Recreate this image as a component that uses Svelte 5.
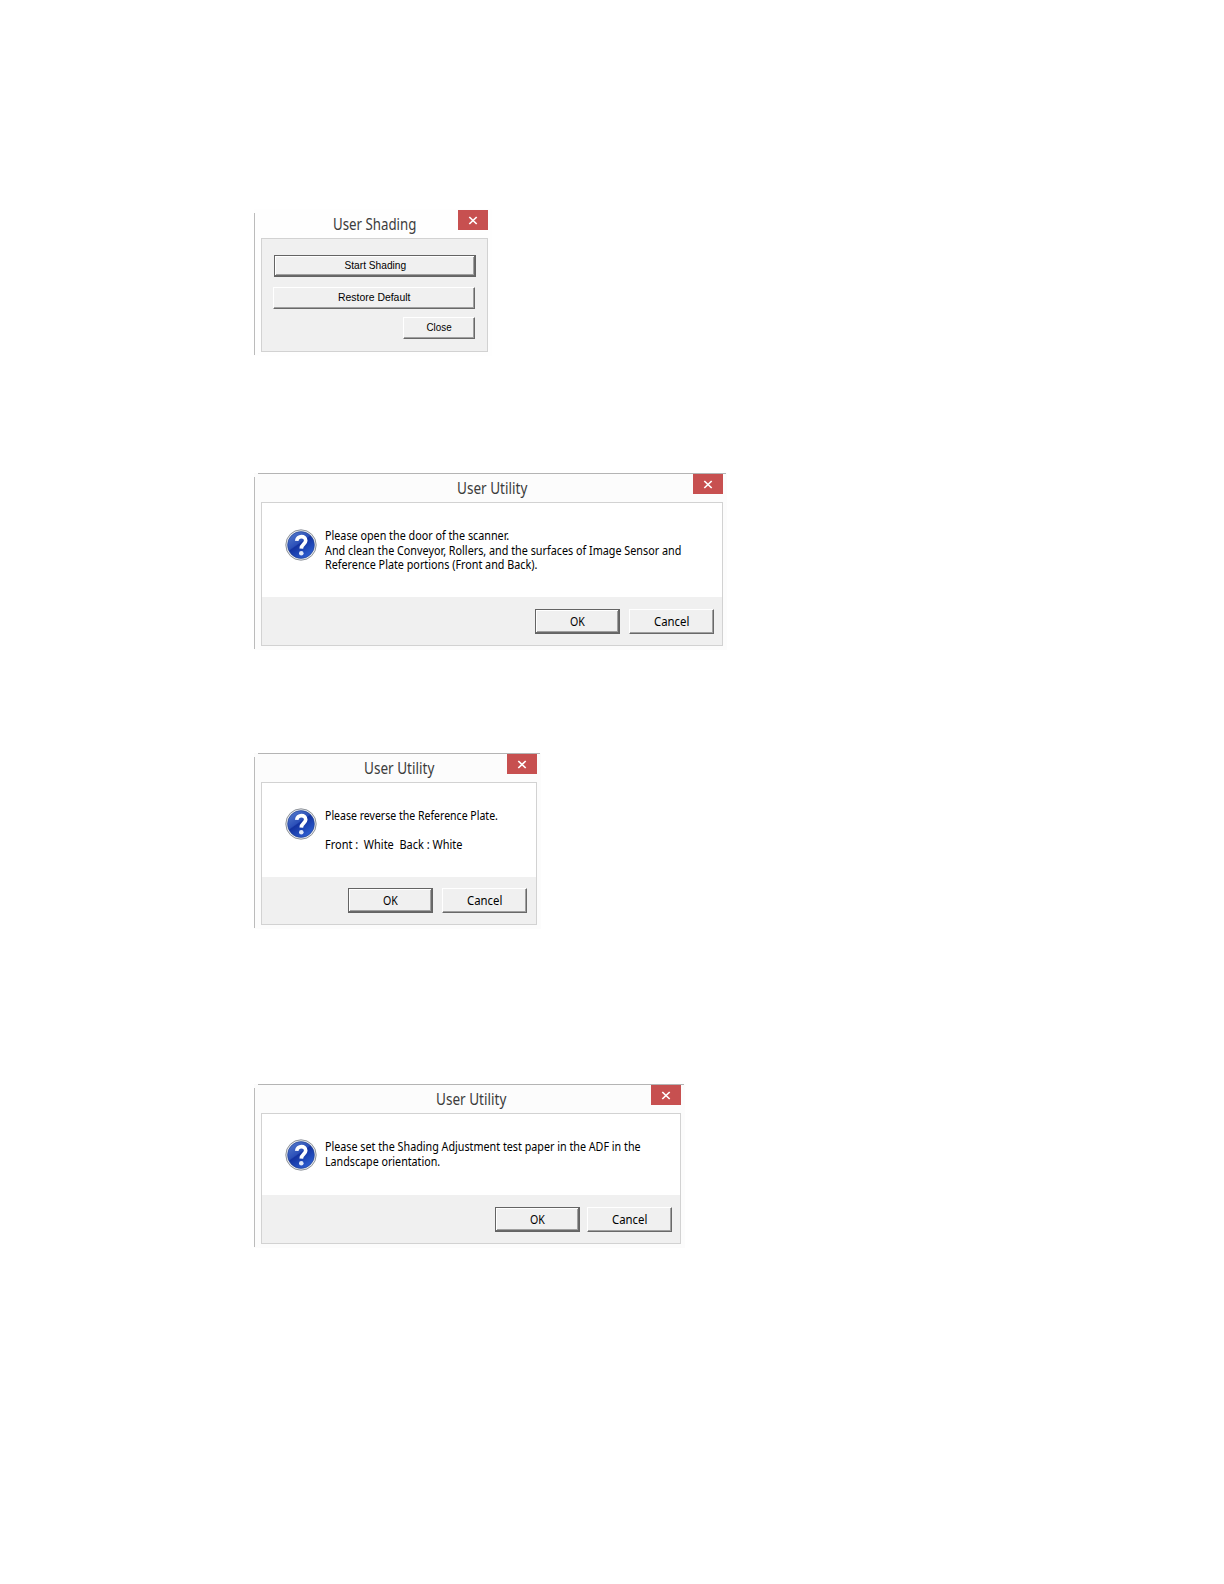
<script lang="ts">
  type Line = { text: string; width: number };

  type Message = {
    id: string;
    width: number;
    bodyHeight: number;
    gap: number;
    buttonGap: number;
    footTop: number;
    footRight: number;
    footHeight: number;
    textTop: number;
    iconTop: number;
    lines: Line[];
  };

  const messages: Message[] = [
    {
      id: 'clean',
      width: 462,
      bodyHeight: 94,
      gap: 117,
      buttonGap: 9,
      footTop: 12,
      footRight: 8,
      footHeight: 48,
      textTop: 26,
      iconTop: 26,
      lines: [
        { text: 'Please open the door of the scanner.', width: 184 },
        { text: 'And clean the Conveyor, Rollers, and the surfaces of Image Sensor and', width: 356 },
        { text: 'Reference Plate portions (Front and Back).', width: 212 },
      ],
    },
    {
      id: 'reverse',
      width: 276,
      bodyHeight: 94,
      gap: 103,
      buttonGap: 9,
      footTop: 11,
      footRight: 9,
      footHeight: 47,
      textTop: 26,
      iconTop: 25,
      lines: [
        { text: 'Please reverse the Reference Plate.', width: 173 },
        { text: '', width: 0 },
        { text: 'Front :  White  Back : White', width: 137 },
      ],
    },
    {
      id: 'paper',
      width: 420,
      bodyHeight: 81,
      gap: 155,
      buttonGap: 7,
      footTop: 12,
      footRight: 8,
      footHeight: 48,
      textTop: 26,
      iconTop: 25,
      lines: [
        { text: 'Please set the Shading Adjustment test paper in the ADF in the', width: 316 },
        { text: 'Landscape orientation.', width: 115 },
      ],
    },
  ];

  // squeeze a label horizontally to the dialog font's narrower advance widths
  function fit(node: HTMLElement, width: number) {
    const natural = node.offsetWidth;
    if (natural > 0 && width > 0) node.style.transform = `scaleX(${width / natural})`;
  }
</script>

{#snippet titlebar(title: string, width: number)}
  <header class="titlebar">
    <h1 class="title"><span class="fit" use:fit={width}>{title}</span></h1>
    <button type="button" class="close" aria-label="Close window">
      <svg width="10" height="9" viewBox="0 0 10 9" aria-hidden="true">
        <path d="M1.3 1L8.7 8M8.7 1L1.3 8" stroke="#fff" stroke-width="1.7" fill="none" />
      </svg>
    </button>
  </header>
{/snippet}

{#snippet question()}
  <svg class="icon" width="32" height="32" viewBox="0 0 32 32" aria-hidden="true">
    <defs>
      <linearGradient id="ball" x1="0" y1="0" x2="0.7" y2="1">
        <stop offset="0" stop-color="#5a80d0" />
        <stop offset="0.48" stop-color="#2c50b8" />
        <stop offset="0.52" stop-color="#1433a0" />
        <stop offset="1" stop-color="#2d5fd2" />
      </linearGradient>
    </defs>
    <circle cx="16" cy="16" r="15.2" fill="#e6e9ee" stroke="#85898f" stroke-width="0.9" />
    <circle cx="16" cy="16" r="13.4" fill="url(#ball)" stroke="#203f91" stroke-width="0.6" />
    <path d="M11.7 11.9C12 6.1 21 6.2 20.7 11.7C20.5 15.2 16.4 15.2 16.3 19.6" fill="none" stroke="#fff" stroke-width="3.7" />
    <circle cx="16.3" cy="24.2" r="2.3" fill="#dfe8f8" />
  </svg>
{/snippet}

<main class="page">
  <section class="dialog shading">
    {@render titlebar('User Shading', 83)}
    <div class="client panel">
      <button type="button" class="btn default wide"><span class="fit" use:fit={62}>Start Shading</span></button>
      <button type="button" class="btn wide restore"><span class="fit" use:fit={72}>Restore Default</span></button>
      <button type="button" class="btn small"><span class="fit" use:fit={25}>Close</span></button>
    </div>
  </section>

  {#each messages as m (m.id)}
    <section class="dialog lined" style={`width:${m.width + 11}px;margin-top:${m.gap}px`}>
      {@render titlebar('User Utility', 70)}
      <div class="client">
        <div class="body" style={`height:${m.bodyHeight}px`}>
          <div style={`padding-top:${m.iconTop}px`}>{@render question()}</div>
          <div class="text" style={`padding-top:${m.textTop}px`}>
            {#each m.lines as line}
              <p><span class="fit left" use:fit={line.width}>{line.text}</span></p>
            {/each}
          </div>
        </div>
        <footer style={`height:${m.footHeight}px;padding-top:${m.footTop}px;padding-right:${m.footRight}px;gap:${m.buttonGap}px`}>
          <button type="button" class="btn default"><span class="fit" use:fit={15}>OK</span></button>
          <button type="button" class="btn"><span class="fit" use:fit={35}>Cancel</span></button>
        </footer>
      </div>
    </section>
  {/each}
</main>

<style>
  :global(body) {
    background: #fff;
  }

  .page {
    box-sizing: border-box;
    width: 1224px;
    height: 1584px;
    padding: 209px 0 0 254px;
    font-family: 'Noto Sans', 'Open Sans', sans-serif;
    color: #000;
    overflow: hidden;
  }

  .dialog {
    position: relative;
    box-sizing: border-box;
    padding: 1px 4px 4px 7px;
    background: #fcfcfc;
  }

  .dialog::before {
    content: '';
    position: absolute;
    left: 0;
    top: 4px;
    bottom: 1px;
    width: 1px;
    background: #bbb;
  }

  .lined::after {
    content: '';
    position: absolute;
    left: 4px;
    right: 1px;
    top: 0;
    height: 1px;
    background: #b4b4b4;
  }

  .shading {
    width: 238px;
    height: 147px;
    background: #fefefe;
  }

  .titlebar {
    display: grid;
    grid-template-columns: 30px 1fr 30px;
    height: 28px;
  }

  .title {
    grid-column: 1 / 4;
    grid-row: 1;
    margin: 0;
    padding-top: 3px;
    font-size: 15.5px;
    font-weight: 400;
    line-height: 22px;
    text-align: center;
    color: #3c3c3c;
  }

  .close {
    grid-column: 3;
    grid-row: 1;
    display: flex;
    align-items: center;
    justify-content: center;
    width: 30px;
    height: 20px;
    padding: 0;
    border: 0;
    background: #c75050;
  }

  .fit {
    display: inline-block;
    white-space: pre;
    transform-origin: center;
  }

  .left {
    transform-origin: left;
  }

  .client {
    border: 1px solid #d2d2d2;
  }

  .panel {
    display: flex;
    flex-direction: column;
    box-sizing: border-box;
    height: 114px;
    padding: 16px 12px 0 11px;
    background: #f0f0f0;
  }

  .body {
    display: flex;
    gap: 8px;
    padding-left: 23px;
    background: #fff;
  }

  .icon {
    display: block;
  }

  .text {
    font-size: 12px;
    line-height: 14.5px;
  }

  .text p {
    height: 14.5px;
    margin: 0;
  }

  footer {
    display: flex;
    justify-content: flex-end;
    box-sizing: border-box;
    background: #f0f0f0;
  }

  /* raised classic push button */
  .btn {
    display: flex;
    align-items: center;
    justify-content: center;
    box-sizing: border-box;
    flex: none;
    width: 85px;
    height: 25px;
    padding: 0;
    border: 1px solid #fff;
    border-right-color: #696969;
    border-bottom-color: #696969;
    background: #f0f0f0;
    box-shadow: inset -1px -1px #a0a0a0;
    font-family: inherit;
    font-size: 12px;
    line-height: 16px;
    color: #000;
  }

  .default {
    border-color: #646464;
    box-shadow:
      inset -1px -1px #696969,
      inset 1px 1px #fff,
      inset -2px -2px #a0a0a0;
  }

  .panel .btn {
    height: 22px;
    padding-bottom: 2px;
    font-family: 'Liberation Sans', Arial, sans-serif;
    font-size: 11px;
  }

  .panel .wide {
    width: 202px;
  }

  .panel .default {
    align-self: flex-end;
    margin-right: -1px;
  }

  .restore {
    margin-top: 10px;
  }

  .panel .small {
    align-self: flex-end;
    width: 72px;
    margin-top: 8px;
  }
</style>
